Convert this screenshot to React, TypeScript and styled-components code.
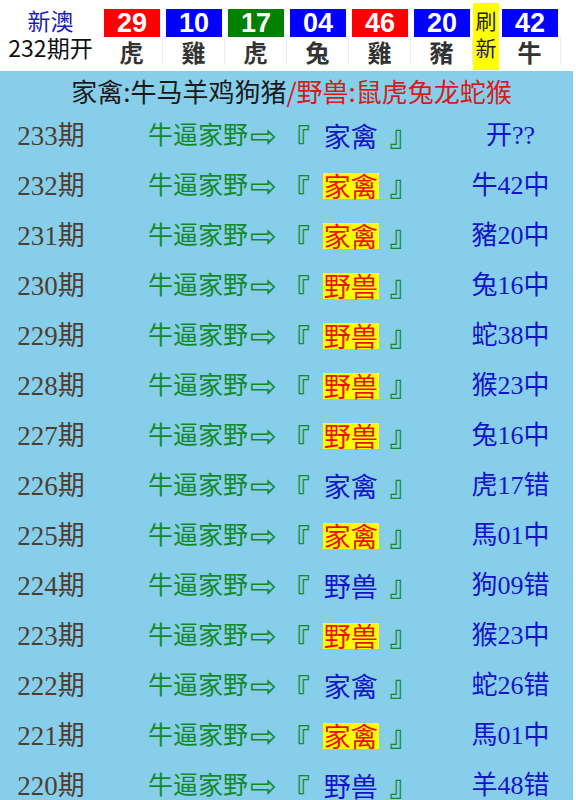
import React from "react";
import styled, { createGlobalStyle } from "styled-components";

const Global = createGlobalStyle`
  html, body { margin: 0; padding: 0; background: #ffffff; }
  body { font-family: "Noto Sans CJK SC", "Noto Sans", sans-serif; }
`;

const Page = styled.div`
  width: 576px;
  background: #ffffff;
`;

const Header = styled.div`
  display: flex;
  height: 71px;
  background: #ffffff;
`;

const Brand = styled.div`
  width: 101px;
  display: flex;
  flex-direction: column;
  align-items: center;
  padding-top: 7px;
  font-family: "Noto Sans CJK SC", sans-serif;
  font-size: 23px;
  line-height: 27px;
`;

const BrandTop = styled.div`
  color: #1c1cc4;
`;

const BrandBottom = styled.div`
  color: #111111;
`;

const Ball = styled.div`
  width: 62px;
  display: flex;
  flex-direction: column;
  align-items: center;
  padding-top: 9px;
  box-sizing: border-box;
`;

const NumBox = styled.div<{ $bg: string }>`
  width: 56px;
  height: 28px;
  background: ${(p) => p.$bg};
  color: #ffffff;
  font-family: "Liberation Sans", Arial, sans-serif;
  font-weight: bold;
  font-size: 27px;
  line-height: 29px;
  text-align: center;
`;

const Animal = styled.div`
  width: 62px;
  height: 28px;
  padding-top: 1px;
  text-align: center;
  font-family: "Noto Sans CJK TC", sans-serif;
  font-weight: bold;
  font-size: 24px;
  line-height: 27px;
  color: #333333;
  border-right: 1px solid #ececec;
  box-sizing: border-box;
`;

const Refresh = styled.div`
  width: 26px;
  margin: 3px 0 1px;
  background: #ffff00;
  color: #222222;
  font-family: "Noto Sans CJK SC", sans-serif;
  font-size: 21px;
  line-height: 27px;
  text-align: center;
  padding-top: 4px;
  box-sizing: border-box;
`;

const Board = styled.div`
  width: 573px;
  background: #87ceeb;
  padding-bottom: 20px;
`;

const Title = styled.div`
  height: 40px;
  padding: 2px 0 0 10px;
  box-sizing: border-box;
  text-align: center;
  font-family: "Noto Sans CJK SC", sans-serif;
  font-size: 26px;
  line-height: 36px;
  color: #1a1a1a;
  white-space: nowrap;
`;

const Red = styled.span`
  color: #d41c1c;
`;

const Row = styled.div`
  display: grid;
  grid-template-columns: 102px 352px 1fr;
  height: 50px;
  align-items: center;
  font-family: "Liberation Serif", "Noto Sans CJK SC", "DejaVu Sans", serif;
  font-size: 25px;
  line-height: 30px;
`;

const Period = styled.div`
  text-align: center;
  color: #4e3e32;
  font-size: 27px;
`;

const Middle = styled.div`
  display: flex;
  align-items: center;
  padding-left: 46px;
  color: #128a2a;
  white-space: pre;
`;

const Arrow = styled.span`
  font-family: "DejaVu Sans", sans-serif;
  font-size: 32px;
  line-height: 30px;
  margin-left: 2px;
`;

const Bracket = styled.span<{ $open?: boolean }>`
  font-family: "Noto Sans CJK SC", sans-serif;
  font-size: 28px;
  font-weight: bold;
  line-height: 30px;
  margin-left: ${(p) => (p.$open ? "5px" : "0")};
  transform: translateY(${(p) => (p.$open ? "2px" : "-2px")});
`;

const Pick = styled.span<{ $hit: boolean }>`
  font-family: "Noto Sans CJK SC", sans-serif;
  font-size: 27px;
  color: ${(p) => (p.$hit ? "#ee1010" : "#1414c8")};
  background: ${(p) => (p.$hit ? "#ffff00" : "transparent")};
  line-height: 26px;
  padding: 0 1px;
  margin: 0 11px 0 13px;
`;

const Result = styled.div`
  text-align: center;
  color: #1414c8;
  font-size: 26px;
  padding-right: 6px;
`;

const balls = [
  { n: "29", bg: "#ff0000", a: "虎" },
  { n: "10", bg: "#0000ff", a: "雞" },
  { n: "17", bg: "#008000", a: "虎" },
  { n: "04", bg: "#0000ff", a: "兔" },
  { n: "46", bg: "#ff0000", a: "雞" },
  { n: "20", bg: "#0000ff", a: "豬" },
];

const rows: { p: string; pick: string; hit: boolean; res: string }[] = [
  { p: "233", pick: "家禽", hit: false, res: "开??" },
  { p: "232", pick: "家禽", hit: true, res: "牛42中" },
  { p: "231", pick: "家禽", hit: true, res: "豬20中" },
  { p: "230", pick: "野兽", hit: true, res: "兔16中" },
  { p: "229", pick: "野兽", hit: true, res: "蛇38中" },
  { p: "228", pick: "野兽", hit: true, res: "猴23中" },
  { p: "227", pick: "野兽", hit: true, res: "兔16中" },
  { p: "226", pick: "家禽", hit: false, res: "虎17错" },
  { p: "225", pick: "家禽", hit: true, res: "馬01中" },
  { p: "224", pick: "野兽", hit: false, res: "狗09错" },
  { p: "223", pick: "野兽", hit: true, res: "猴23中" },
  { p: "222", pick: "家禽", hit: false, res: "蛇26错" },
  { p: "221", pick: "家禽", hit: true, res: "馬01中" },
  { p: "220", pick: "野兽", hit: false, res: "羊48错" },
];

export default function App() {
  return (
    <Page>
      <Global />
      <Header>
        <Brand>
          <BrandTop>新澳</BrandTop>
          <BrandBottom>232期开</BrandBottom>
        </Brand>
        {balls.map((b, i) => (
          <Ball key={i}>
            <NumBox $bg={b.bg}>{b.n}</NumBox>
            <Animal>{b.a}</Animal>
          </Ball>
        ))}
        <Refresh>
          刷<br />新
        </Refresh>
        <Ball>
          <NumBox $bg="#0000ff">42</NumBox>
          <Animal>牛</Animal>
        </Ball>
      </Header>
      <Board>
        <Title>
          家禽:牛马羊鸡狗猪<Red>/野兽:鼠虎兔龙蛇猴</Red>
        </Title>
        {rows.map((r) => (
          <Row key={r.p}>
            <Period>{r.p}期</Period>
            <Middle>
              牛逼家野<Arrow>⇨</Arrow>
              <Bracket $open>『</Bracket>
              <Pick $hit={r.hit}>{r.pick}</Pick>
              <Bracket>』</Bracket>
            </Middle>
            <Result>{r.res}</Result>
          </Row>
        ))}
      </Board>
    </Page>
  );
}
